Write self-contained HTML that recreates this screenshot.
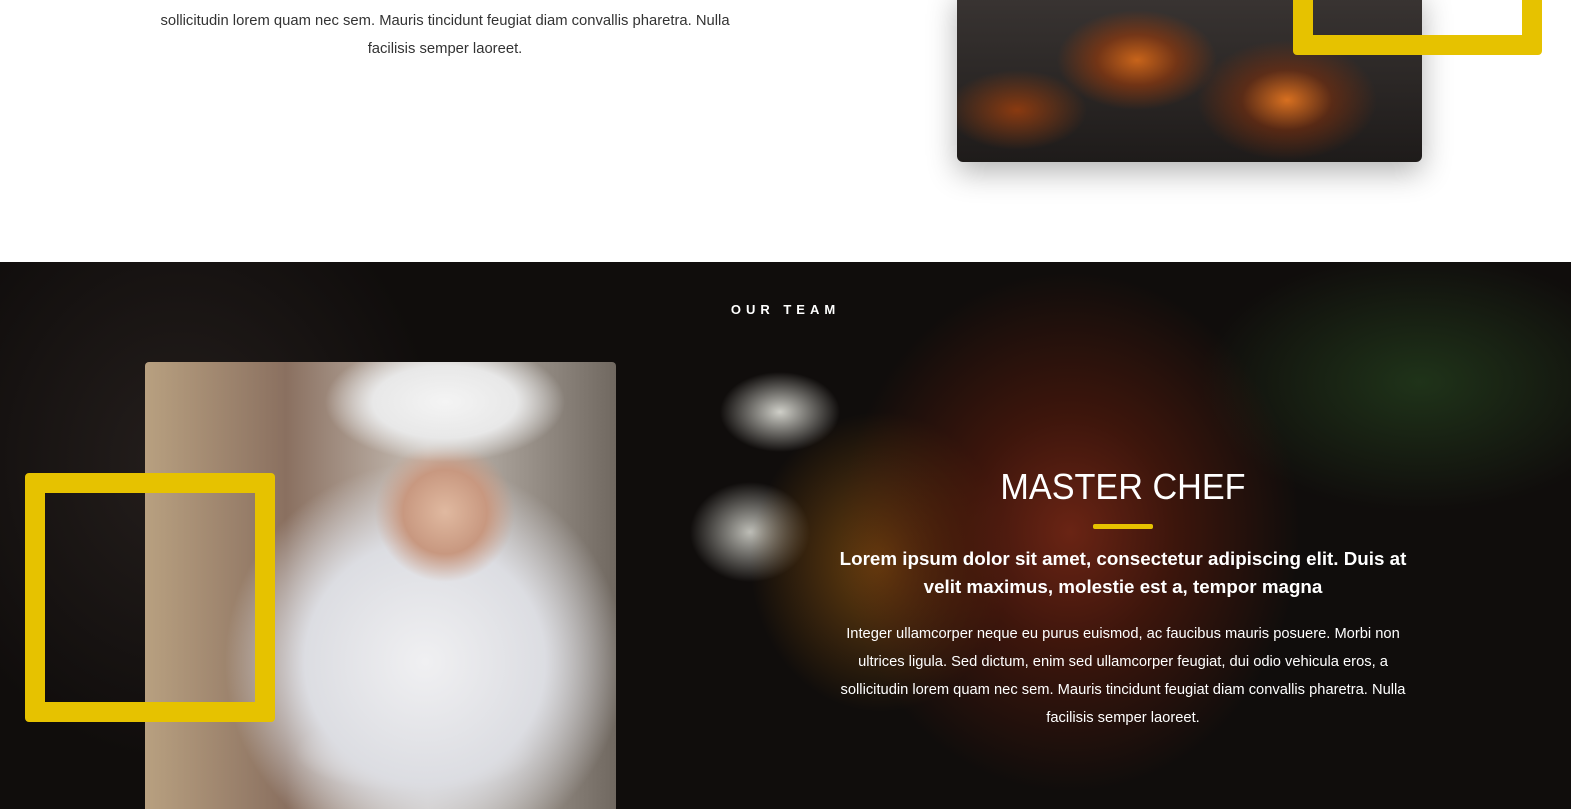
<!DOCTYPE html>
<html><head><style>
*{margin:0;padding:0;box-sizing:border-box}
body{width:1571px;height:809px;overflow:hidden;background:#fff;font-family:"Liberation Sans",sans-serif;position:relative}
.p{position:absolute;text-align:center;font-size:14.8px;line-height:28px;color:#333}
.fire{position:absolute;left:957px;top:-10px;width:465px;height:172px;border-radius:0 0 6px 6px;box-shadow:0 10px 30px rgba(0,0,0,.3);
background:radial-gradient(ellipse 80px 50px at 180px 70px,#c8641a 0%,rgba(160,60,10,.6) 50%,transparent 100%),radial-gradient(ellipse 90px 60px at 330px 110px,#d87020 0%,rgba(140,50,10,.5) 50%,transparent 100%),radial-gradient(ellipse 70px 40px at 60px 120px,#8a3a10,transparent),linear-gradient(#3a3533,#1e1b1a)}
.frame{position:absolute;border:20px solid #e6c200;border-radius:4px}
.dark{position:absolute;left:0;top:262px;width:1571px;height:547px;overflow:hidden;
background:radial-gradient(ellipse 230px 260px at 1070px 270px,#6a2414 0%,rgba(80,25,12,.7) 45%,transparent 100%),radial-gradient(ellipse 130px 150px at 880px 300px,#6a400e 0%,transparent 100%),radial-gradient(ellipse 60px 40px at 780px 150px,#cfcfc8 0%,transparent 100%),radial-gradient(ellipse 60px 50px at 750px 270px,#bdbdb6 0%,transparent 100%),radial-gradient(ellipse 220px 130px at 1420px 120px,#1f3319 0%,transparent 100%),radial-gradient(ellipse 260px 300px at 180px 200px,#241e1c 0%,transparent 100%),#100d0c}
.chef{position:absolute;left:145px;top:362px;width:471px;height:447px;border-radius:4px 4px 0 0;
background:radial-gradient(ellipse 120px 60px at 300px 40px,#f4f4f4 0%,#e8e8e8 60%,transparent 100%),radial-gradient(ellipse 70px 70px at 300px 150px,#e0b9a0 0%,#c89880 60%,transparent 100%),radial-gradient(ellipse 200px 200px at 280px 300px,#f0f0f2 0%,#dcdde2 60%,transparent 100%),radial-gradient(ellipse 120px 40px at 270px 390px,#fff 0%,transparent 100%),linear-gradient(90deg,#b8a080 0%,#8a7060 30%,#c8c0b8 60%,#706860 100%)}
</style></head><body>
<div class="p" style="left:130px;top:-21px;width:630px">Integer ullamcorper neque eu purus euismod, ac faucibus mauris posuere. Morbi non<br>sollicitudin lorem quam nec sem. Mauris tincidunt feugiat diam convallis pharetra. Nulla<br>facilisis semper laoreet.</div>
<div class="fire"></div>
<div class="frame" style="left:1293px;top:-30px;width:249px;height:85px"></div>
<div class="dark"></div>
<div style="position:absolute;left:0;width:1571px;top:302px;text-align:center;color:#fff;font-size:13px;font-weight:bold;letter-spacing:5px">OUR TEAM</div>
<div class="chef"></div>
<div class="frame" style="left:25px;top:473px;width:250px;height:249px"></div>
<div style="position:absolute;left:803px;width:640px;top:464px;text-align:center;color:#fff">
<div style="font-size:36px;line-height:46px;transform:scaleX(.95)">MASTER CHEF</div>
<div style="width:60px;height:5px;background:#e6c200;margin:14px auto 16px;border-radius:2px"></div>
<div style="font-size:18.8px;font-weight:bold;line-height:28px">Lorem ipsum dolor sit amet, consectetur adipiscing elit. Duis at<br>velit maximus, molestie est a, tempor magna</div>
<div style="font-size:14.7px;line-height:28px;margin-top:19px">Integer ullamcorper neque eu purus euismod, ac faucibus mauris posuere. Morbi non<br>ultrices ligula. Sed dictum, enim sed ullamcorper feugiat, dui odio vehicula eros, a<br>sollicitudin lorem quam nec sem. Mauris tincidunt feugiat diam convallis pharetra. Nulla<br>facilisis semper laoreet.</div>
</div>
</body></html>
